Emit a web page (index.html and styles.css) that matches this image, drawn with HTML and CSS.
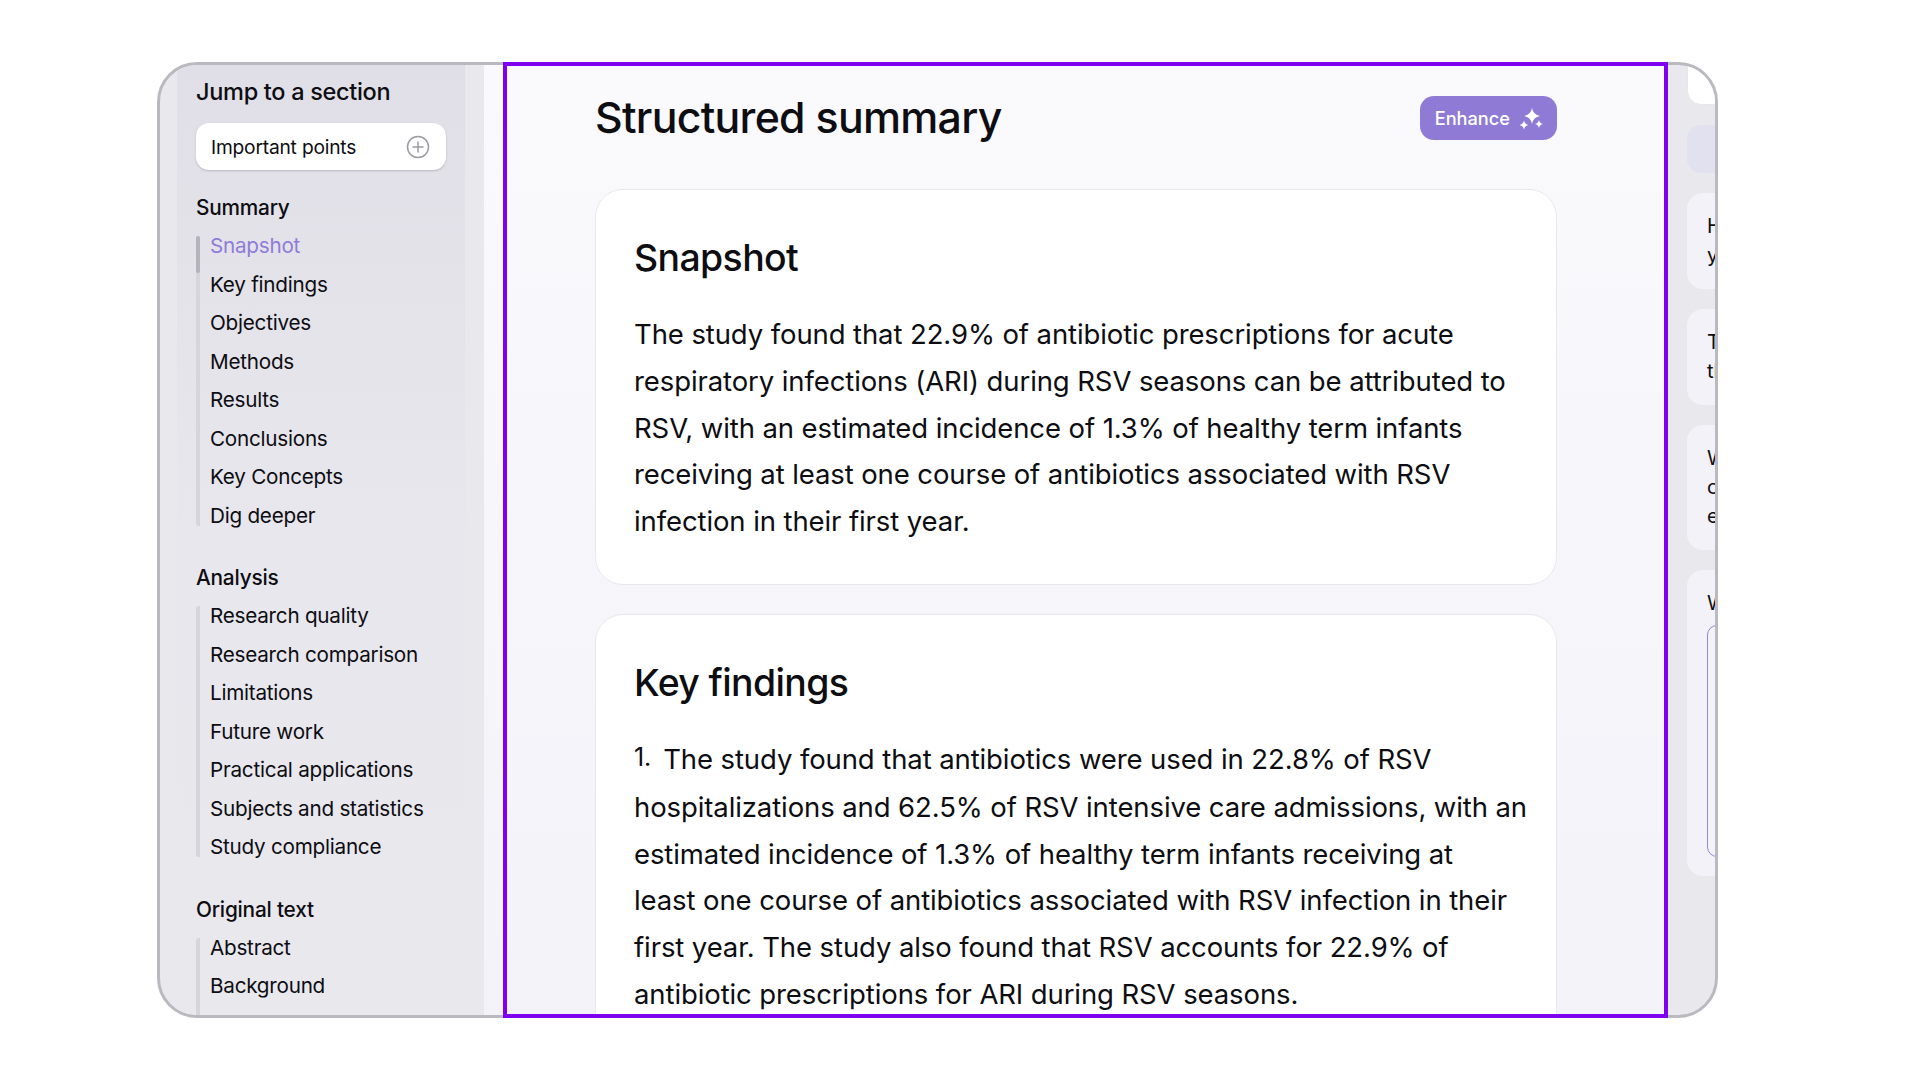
FILE: index.html
```html
<!DOCTYPE html>
<html lang="en">
<head>
<meta charset="utf-8">
<title>Structured summary</title>
<link rel="stylesheet" href="styles.css">
</head>
<body>
<div class="stage">
  <div class="frame">
    <aside class="side">
      <div class="side-inner">
        <h2 class="jump">Jump to a section</h2>
        <div class="picker">
          <span>Important points</span>
          <svg class="plus" viewBox="0 0 24 24" width="24" height="24" fill="none" stroke="#9c9ba3" stroke-width="1.5"><circle cx="12" cy="12" r="10.5"/><path d="M12 6.5v11M6.5 12h11"/></svg>
        </div>
        <h3 class="group">Summary</h3>
        <ul class="rail">
          <li class="thumb" aria-hidden="true"></li>
          <li class="active">Snapshot</li>
          <li>Key findings</li>
          <li>Objectives</li>
          <li>Methods</li>
          <li>Results</li>
          <li>Conclusions</li>
          <li>Key Concepts</li>
          <li>Dig deeper</li>
        </ul>
        <h3 class="group later">Analysis</h3>
        <ul class="rail">
          <li>Research quality</li>
          <li>Research comparison</li>
          <li>Limitations</li>
          <li>Future work</li>
          <li>Practical applications</li>
          <li>Subjects and statistics</li>
          <li>Study compliance</li>
        </ul>
        <h3 class="group later">Original text</h3>
        <ul class="rail">
          <li>Abstract</li>
          <li>Background</li>
          <li>Methods</li>
        </ul>
      </div>
    </aside>
    <main class="main">
      <header class="head">
        <h1 class="title">Structured summary</h1>
        <button class="enhance">Enhance
          <svg viewBox="0 0 24 24" width="24" height="24" fill="#fff"><path d="M12 2Q13.200 8.800 20 10 13.200 11.200 12 18 10.800 11.200 4 10 10.800 8.800 12 2Z"/><path d="M4 14.500Q4.800 18.200 8.500 19 4.800 19.800 4 23.500 3.200 19.800-.5 19 3.200 18.200 4 14.500Z"/><path d="M19 14Q19.700 17.300 23 18 19.700 18.700 19 22 18.300 18.700 15 18 18.300 17.300 19 14Z"/></svg>
        </button>
      </header>
      <section class="card">
        <h2 class="card-title">Snapshot</h2>
        <p class="body">The study found that 22.9% of antibiotic prescriptions for acute<br>respiratory infections (ARI) during RSV seasons can be attributed to<br>RSV, with an estimated incidence of 1.3% of healthy term infants<br>receiving at least one course of antibiotics associated with RSV<br>infection in their first year.</p>
      </section>
      <section class="card">
        <h2 class="card-title">Key findings</h2>
        <p class="body"><span class="num">1.</span>The study found that antibiotics were used in 22.8% of RSV<br>hospitalizations and 62.5% of RSV intensive care admissions, with an<br>estimated incidence of 1.3% of healthy term infants receiving at<br>least one course of antibiotics associated with RSV infection in their<br>first year. The study also found that RSV accounts for 22.9% of<br>antibiotic prescriptions for ARI during RSV seasons.</p>
      </section>
    </main>
    <aside class="chat">
      <div class="chat-top"></div>
      <div class="chat-tab"></div>
      <div class="qa tall1">How does<br>your</div>
      <div class="qa tall1">The study<br>the</div>
      <div class="qa tall2">What<br>could<br>each</div>
      <div class="qa ask">
        <div>What</div>
        <div class="box"></div>
      </div>
    </aside>
  </div>
  <div class="highlight" aria-hidden="true"></div>
</div>
</body>
</html>
```
FILE: styles.css
```css
* { box-sizing: border-box; }
html, body { margin: 0; background: #fff; }
body { font-family: Inter, "Liberation Sans", sans-serif; color: #0d0d12; height: 1080px; overflow: hidden; }
.stage { position: relative; width: 1561px; height: 956px; margin: 62px 0 0 157px; }
.frame { display: flex; width: 100%; height: 100%; border: 3px solid #bab9c0; border-radius: 40px; overflow: hidden; background: #e9e8ed; }
.side { flex: 0 0 324px; padding-left: 17px; }
.side-inner { width: 288px; height: 100%; padding: 12px 0 0 19px; background: linear-gradient(#e0dfe7, #e8e7ed 50%, #e9e8ed); overflow: hidden; }
.jump { margin: 0; font-size: 23.500px; line-height: 30px; font-weight: 500; letter-spacing: -.3px; }
.picker { display: flex; align-items: center; justify-content: space-between; width: 250px; height: 47px; margin-top: 16px; padding: 0 16px 0 15px; background: #fff; border-radius: 13px; box-shadow: 0 1px 2px rgba(60,60,80,.25); font-size: 19.200px; letter-spacing: -.2px; }
.plus { display: block; }
.group { margin: 23px 0 0; font-size: 20.800px; line-height: 30px; font-weight: 500; letter-spacing: -.2px; }
.group.later { margin-top: 37.500px; }
.rail { position: relative; list-style: none; margin: 13px 0 0; padding: 0 0 0 10px; border-left: 4px solid #d6d5de; border-radius: 3px; font-size: 20.700px; letter-spacing: -.25px; }
.rail li { height: 38.500px; line-height: 20px; white-space: nowrap; }
.rail li:last-child { height: 20px; }
.rail .thumb { position: absolute; left: -4px; top: 0; width: 4px; height: 37px; background: #b5b4bd; border-radius: 3px; }
.rail .active { color: #8f7bd9; }
.main { flex: 0 0 1184px; padding: 0 0 0 111px; background: linear-gradient(#fafafc, #f3f2f9); }
.head { display: flex; justify-content: space-between; align-items: flex-start; width: 962px; padding-top: 31px; height: 124px; }
.title { margin: 0; font-size: 42.800px; line-height: 44px; font-weight: 500; letter-spacing: -.7px; }
.enhance { display: flex; align-items: center; gap: 10px; height: 44px; padding: 0 13px 0 15px; border: 0; border-radius: 14px; background: #8f7bd6; color: #fff; font: 500 18.200px Inter, sans-serif; }
.card { width: 962px; padding: 44px 38px 39px; margin-bottom: 29px; background: #fff; border: 1px solid #e8e7ee; border-radius: 28px; }
.card-title { margin: 0 0 29px; font-size: 37.400px; line-height: 48px; font-weight: 500; letter-spacing: -.6px; }
.body { margin: 0; font-size: 27.500px; line-height: 46.800px; letter-spacing: -.1px; white-space: nowrap; }
.num { margin-right: 12px; font-size: 25px; position: relative; top: -3px; }
.chat { flex: 0 0 300px; padding-left: 19px; }
.chat > * { width: 270px; }
.chat-top { height: 43px; background: #fff; border: 1px solid #e6e6ec; border-radius: 0 0 14px 14px; margin-top: -3px; }
.chat-tab { height: 48px; margin-top: 20px; background: #e2e1ef; border-radius: 14px; }
.qa { margin-top: 20px; padding: 18.500px 20px; background: #f3f2f9; border-radius: 16px; font-size: 20px; line-height: 29px; }
.tall1 { height: 96px; }
.tall2 { height: 125px; }
.ask { height: 306px; }
.box { width: 240px; height: 232px; margin-top: 7px; border: 1.500px solid #9b84dc; border-radius: 10px; }
.highlight { position: absolute; left: 346px; top: 0; width: 1165px; height: 956px; border: 4px solid #7f00ee; pointer-events: none; }
```
